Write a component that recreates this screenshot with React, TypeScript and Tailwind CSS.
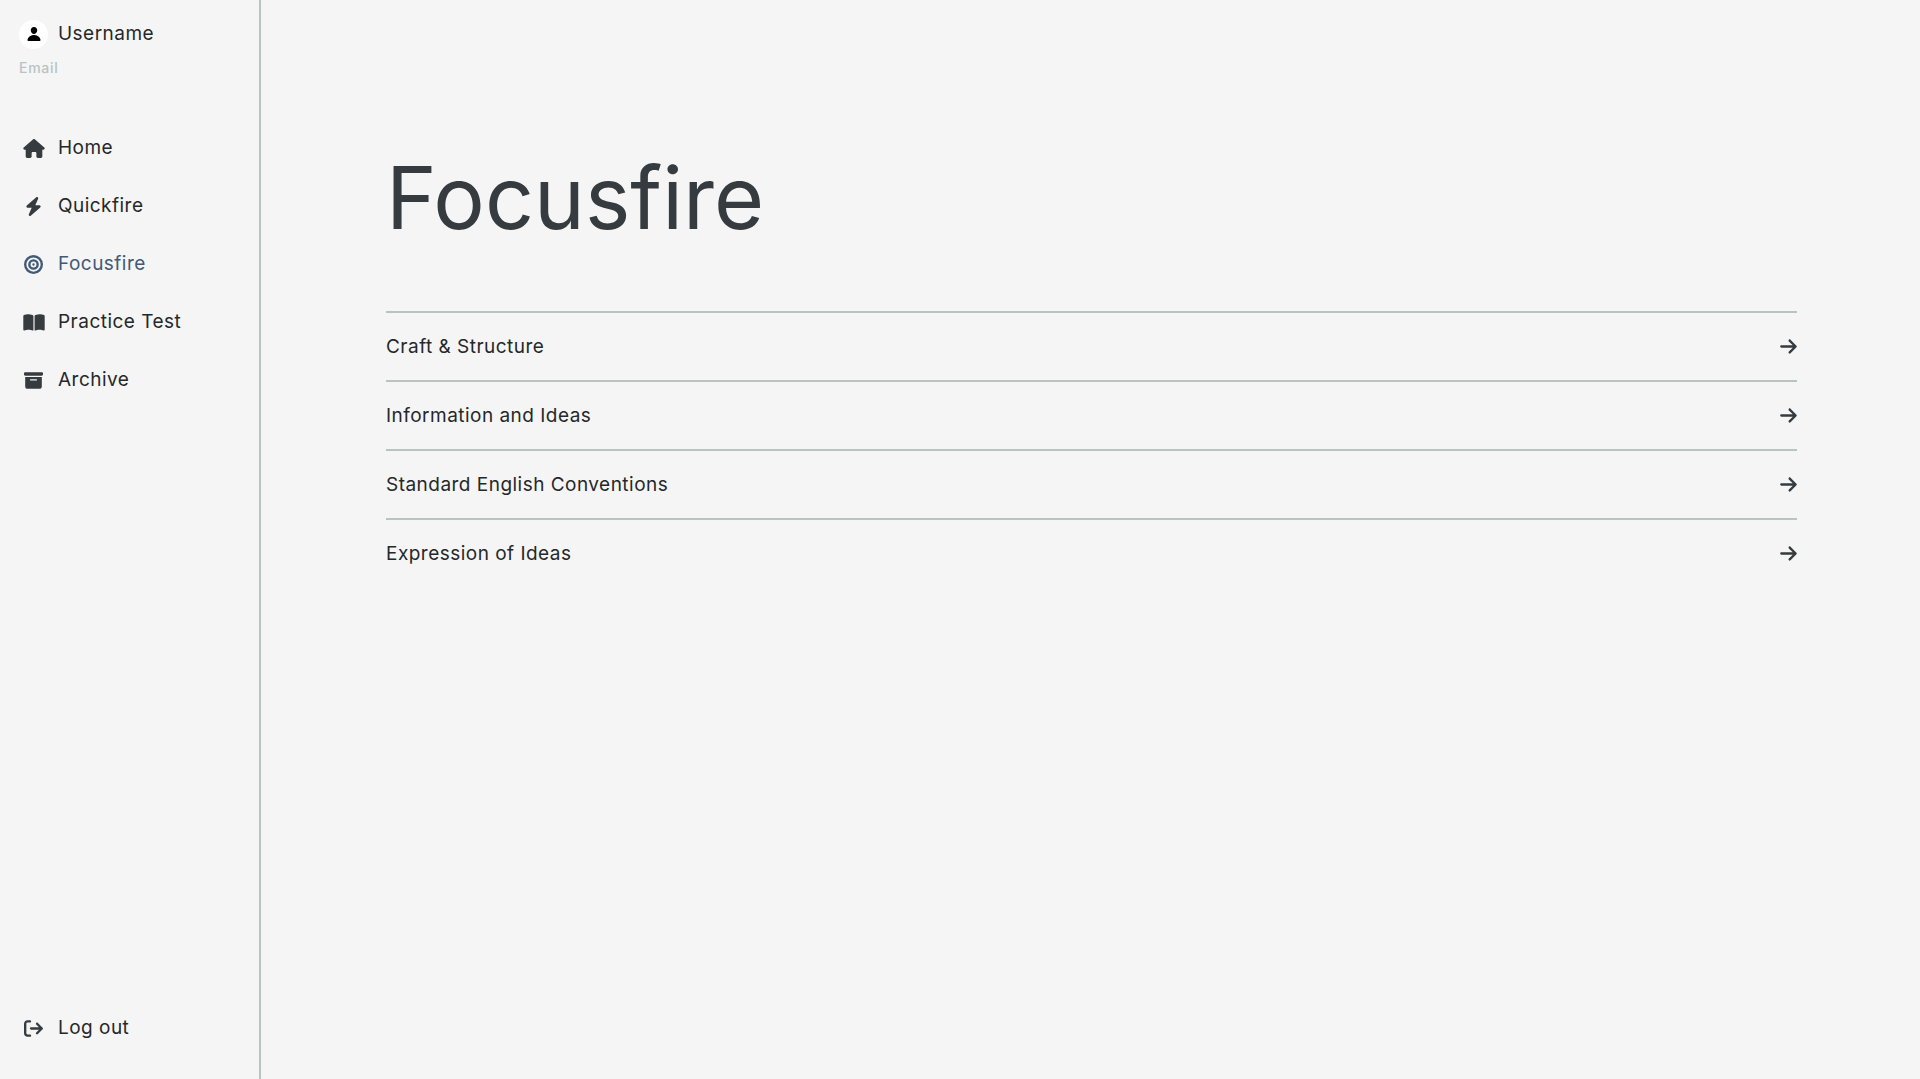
import { FaArrowRight, FaArrowRightFromBracket, FaBolt, FaBookOpen, FaBoxArchive, FaBullseye, FaHouse } from 'react-icons/fa6'
import { IoPerson } from 'react-icons/io5'

const navItems = [
  { name: 'Home', icon: FaHouse, href: '#home', size: 'h-[19px] w-[22px]' },
  { name: 'Quickfire', icon: FaBolt, href: '#quickfire', size: 'h-[19px] w-[17px]' },
  { name: 'Focusfire', icon: FaBullseye, href: '#focusfire', size: 'h-[19px] w-[19px]' },
  { name: 'Practice Test', icon: FaBookOpen, href: '#practice-test', size: 'h-[19px] w-[22px]' },
  { name: 'Archive', icon: FaBoxArchive, href: '#archive', size: 'h-[19px] w-[19px]' },
]

const domains = [
  'Craft & Structure',
  'Information and Ideas',
  'Standard English Conventions',
  'Expression of Ideas',
]

function Sidebar({ active }: { active: string }) {
  return (
    <aside className="flex w-[261px] shrink-0 flex-col justify-between border-r-2 border-[#b9c3c1] pb-9 pl-[19px]">
      <div>
        <div className="mt-[19px] flex items-center gap-[10px]">
          <div className="flex size-[29px] items-center justify-center rounded-full bg-white text-black">
            <IoPerson size={16} />
          </div>
          <span>Username</span>
        </div>
        <p className="mt-[11px] text-sm leading-4 font-medium tracking-wider text-[#b9c3c1]">Email</p>

        <nav className="mt-[57px] flex flex-col gap-7">
          {navItems.map(({ name, icon: Icon, href, size }) => (
            <a
              key={name}
              href={href}
              className={`flex items-center gap-[10px] ${name === active ? 'text-[#415a77]' : ''}`}
            >
              <span className={`flex w-[29px] justify-center ${name === active ? '' : 'text-[#353b3e]'}`}>
                <Icon className={size} />
              </span>
              {name}
            </a>
          ))}
        </nav>
      </div>

      <button type="button" className="flex items-center gap-[10px] tracking-wide">
        <span className="flex w-[29px] justify-center text-[#353b3e]">
          <FaArrowRightFromBracket className="h-[19px] w-[19px]" />
        </span>
        Log out
      </button>
    </aside>
  )
}

export default function App() {
  return (
    <div className="flex min-h-screen bg-[#f5f5f5] font-['Inter',sans-serif] text-[19px] leading-[30px] tracking-wide text-[#25282a]">
      <Sidebar active="Focusfire" />

      <main className="flex-1 pt-[144px] pr-[123px] pl-[125px]">
        <h1 className="text-[86px] leading-[108px] tracking-normal text-[#353b3e]">Focusfire</h1>

        <ul className="mt-[59px]">
          {domains.map((domain) => (
            <li key={domain} className="border-t-2 border-[#b9c3c1]">
              <a href="#focusfire" className="flex h-[67px] items-center justify-between">
                {domain}
                <FaArrowRight className="h-[19px] w-[17px] text-[#353b3e]" />
              </a>
            </li>
          ))}
        </ul>
      </main>
    </div>
  )
}
